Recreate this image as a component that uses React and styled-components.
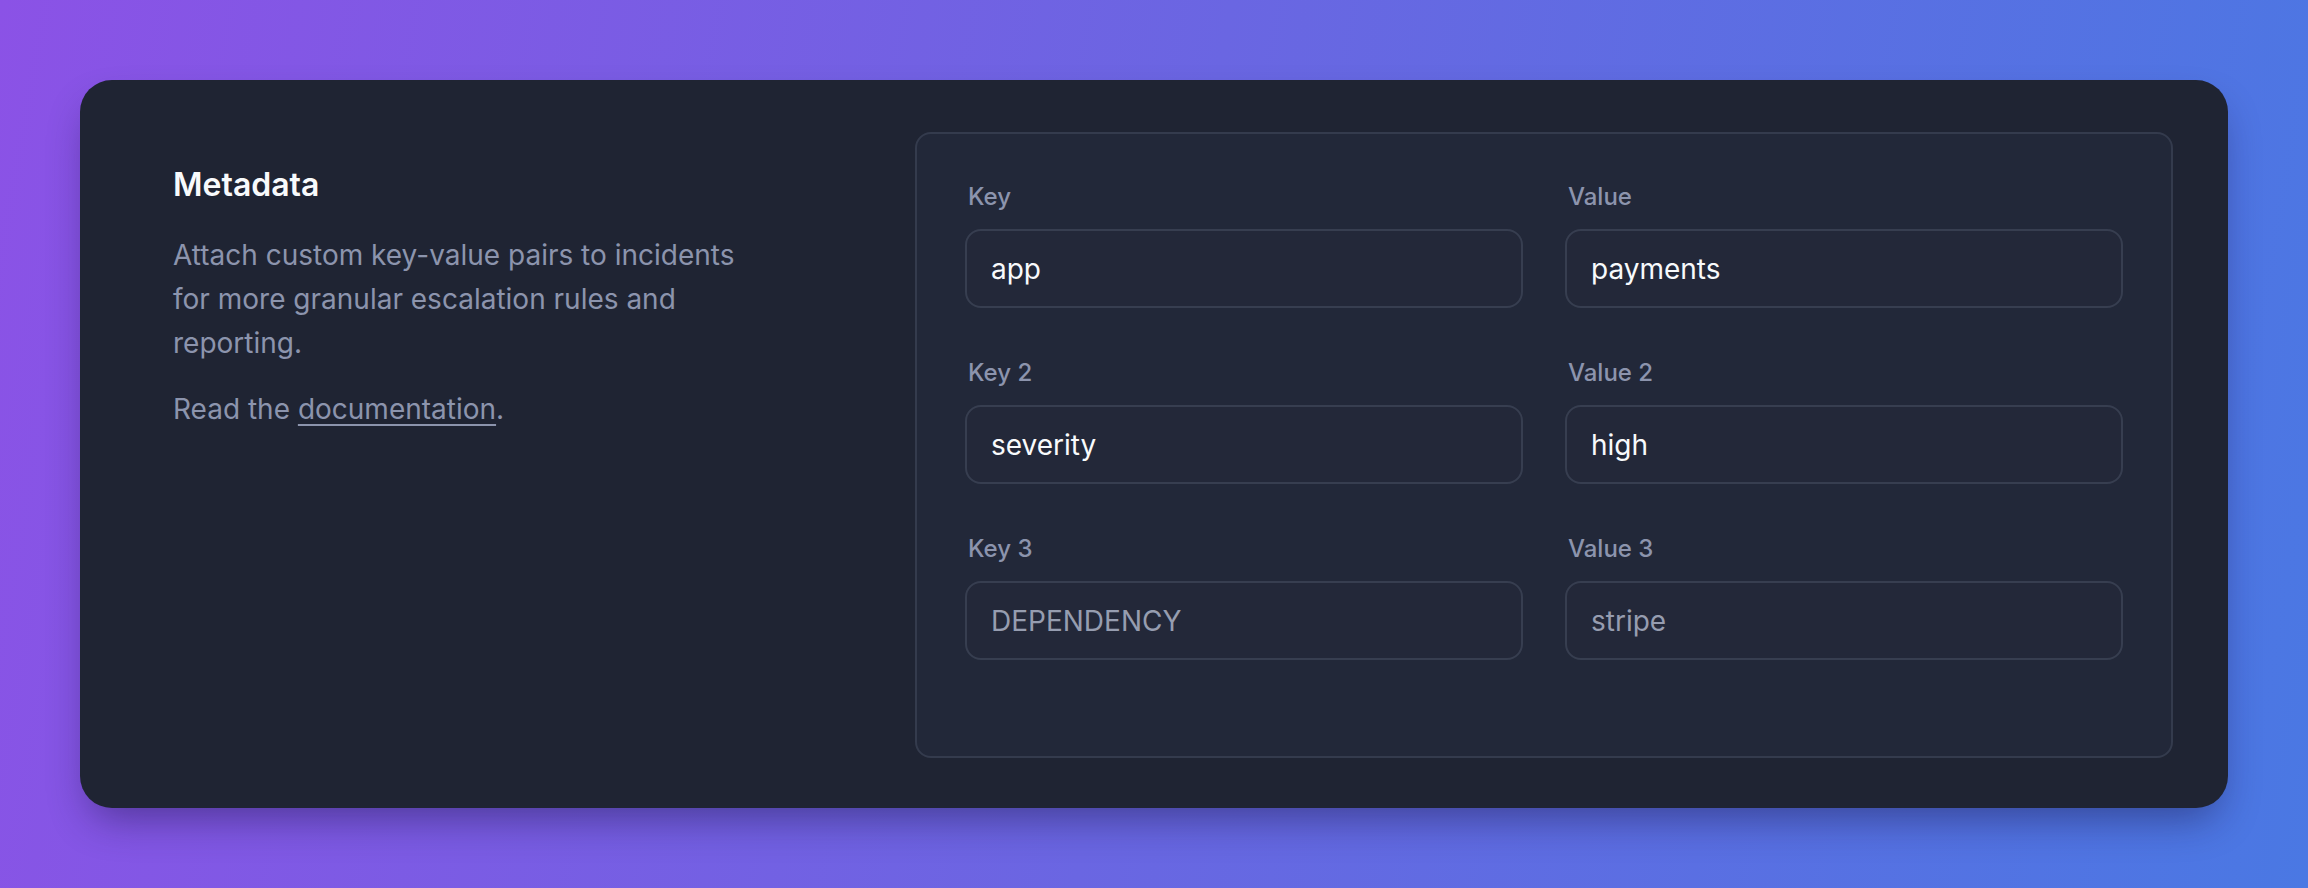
import React from 'react'
import styled, { createGlobalStyle } from 'styled-components'

const GlobalStyle = createGlobalStyle`
	* {
		box-sizing: border-box;
	}
	body {
		margin: 0;
		font-family: Inter, 'Noto Sans', sans-serif;
		background: linear-gradient(100deg, #8b52e6 0%, #6a66e2 50%, #4a78e3 100%);
		min-height: 100vh;
	}
`

const fields = [
	{ key: 'Key', value: 'Value', k: 'app', v: 'payments' },
	{ key: 'Key 2', value: 'Value 2', k: 'severity', v: 'high' },
	{ key: 'Key 3', value: 'Value 3', kp: 'DEPENDENCY', vp: 'stripe' }
]

const Field = ({ label, value, placeholder }) => (
	<FieldWrap>
		<Label>{label}</Label>
		<Input defaultValue={value} placeholder={placeholder} />
	</FieldWrap>
)

const App = () => (
	<Page>
		<GlobalStyle />
		<Card>
			<Intro>
				<Title>Metadata</Title>
				<Text>
					Attach custom key-value pairs to incidents for more granular
					escalation rules and reporting.
				</Text>
				<Text>
					Read the <a href="#docs">documentation</a>.
				</Text>
			</Intro>
			<FormBox>
				{fields.map(row => (
					<Row key={row.key}>
						<Field label={row.key} value={row.k} placeholder={row.kp} />
						<Field label={row.value} value={row.v} placeholder={row.vp} />
					</Row>
				))}
			</FormBox>
		</Card>
	</Page>
)

export default App

const Page = styled.div`
	padding: 80px;
`

const Card = styled.section`
	display: flex;
	background: #1f2433;
	border-radius: 32px;
	padding: 52px 55px 50px 52px;
	box-shadow: 0 20px 40px -10px rgba(20, 16, 60, 0.45);
`

const Intro = styled.div`
	width: 783px;
	flex-shrink: 0;
	padding: 33px 0 0 41px;
`

const Title = styled.h2`
	margin: 0 0 28px;
	font-size: 32px;
	line-height: 40px;
	font-weight: 600;
	color: #f8fafc;
`

const Text = styled.p`
	margin: 0 0 22px;
	max-width: 598px;
	font-size: 28px;
	line-height: 44px;
	color: #8c94ad;
	a {
		color: inherit;
		text-decoration: underline;
		text-decoration-thickness: 2px;
		text-underline-offset: 5px;
	}
`

const FormBox = styled.div`
	flex: 1;
	display: flex;
	flex-direction: column;
	gap: 49px;
	background: #222839;
	border: 2px solid #343b4d;
	border-radius: 16px;
	padding: 47px 48px 96px;
`

const Row = styled.div`
	display: grid;
	grid-template-columns: 1fr 1fr;
	gap: 42px;
`

const FieldWrap = styled.label`
	display: flex;
	flex-direction: column;
	gap: 16px;
`

const Label = styled.span`
	font-size: 24px;
	line-height: 32px;
	font-weight: 500;
	color: #8c94ad;
	padding-left: 3px;
`

const Input = styled.input`
	height: 79px;
	width: 100%;
	background: #232839;
	border: 2px solid #373e50;
	border-radius: 16px;
	padding: 0 24px;
	font-family: Inter, 'Noto Sans', sans-serif;
	font-size: 28px;
	color: #f8fafc;
	outline: none;
	&::placeholder {
		color: #969db0;
		opacity: 1;
	}
`
